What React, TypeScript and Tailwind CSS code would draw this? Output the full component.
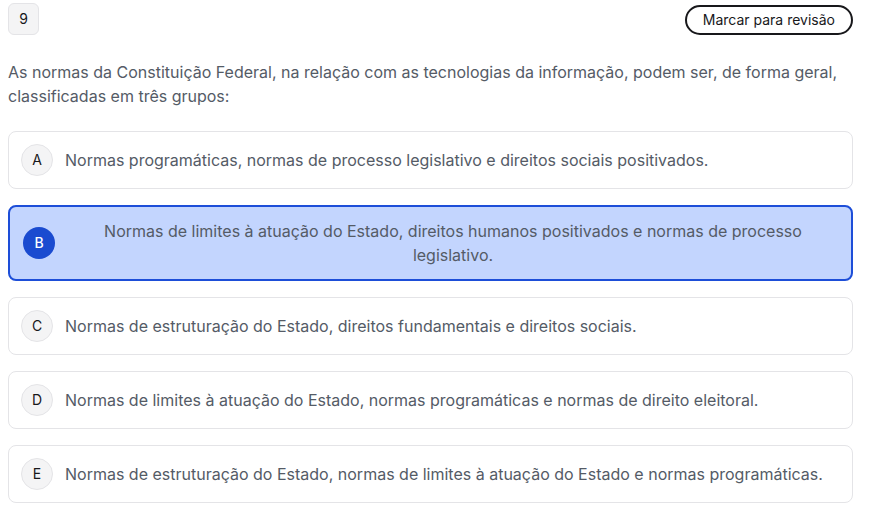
const OPTIONS = [
  { letter: "A", text: "Normas programáticas, normas de processo legislativo e direitos sociais positivados." },
  {
    letter: "B",
    text: "Normas de limites à atuação do Estado, direitos humanos positivados e normas de processo legislativo.",
  },
  { letter: "C", text: "Normas de estruturação do Estado, direitos fundamentais e direitos sociais." },
  { letter: "D", text: "Normas de limites à atuação do Estado, normas programáticas e normas de direito eleitoral." },
  {
    letter: "E",
    text: "Normas de estruturação do Estado, normas de limites à atuação do Estado e normas programáticas.",
  },
];

const SELECTED = "B";

export default function App() {
  return (
    <div className="min-h-screen bg-white px-2 pt-[3px] font-['Inter',sans-serif] text-[#545b66]">
      <div className="flex items-start justify-between">
        <div className="flex h-8 w-[31px] items-center justify-center rounded-md border border-[#e4e4e7] bg-[#f4f4f5] text-sm text-[#18181b]">
          9
        </div>
        <button className="mt-0.5 mr-[13px] h-[30px] rounded-full border-2 border-[#18181b] px-4 text-sm text-[#18181b]">
          Marcar para revisão
        </button>
      </div>

      <p className="mt-[25px] text-base leading-6">
        As normas da Constituição Federal, na relação com as tecnologias da informação, podem ser, de forma geral,
        classificadas em três grupos:
      </p>

      <div className="mt-[23px] mr-[13px] flex flex-col gap-4">
        {OPTIONS.map((opt) => {
          const active = opt.letter === SELECTED;
          return (
            <div
              key={opt.letter}
              className={`flex items-center gap-3 rounded-lg px-3 py-3 ${
                active
                  ? "border-2 border-[#1d4ed8] bg-[#c3d5fe] pl-[13px]"
                  : "border border-[#e4e4e7] bg-white"
              }`}
            >
              <span
                className={`flex h-8 w-8 shrink-0 items-center justify-center rounded-full text-sm ${
                  active
                    ? "bg-[#1a4bd0] font-medium text-white"
                    : "border border-[#e4e4e7] bg-[#f4f4f5] text-[#18181b]"
                }`}
              >
                {opt.letter}
              </span>
              <span className={`text-base leading-6 ${active ? "flex-1 px-8 text-center" : ""}`}>
                {opt.text}
              </span>
            </div>
          );
        })}
      </div>
    </div>
  );
}
